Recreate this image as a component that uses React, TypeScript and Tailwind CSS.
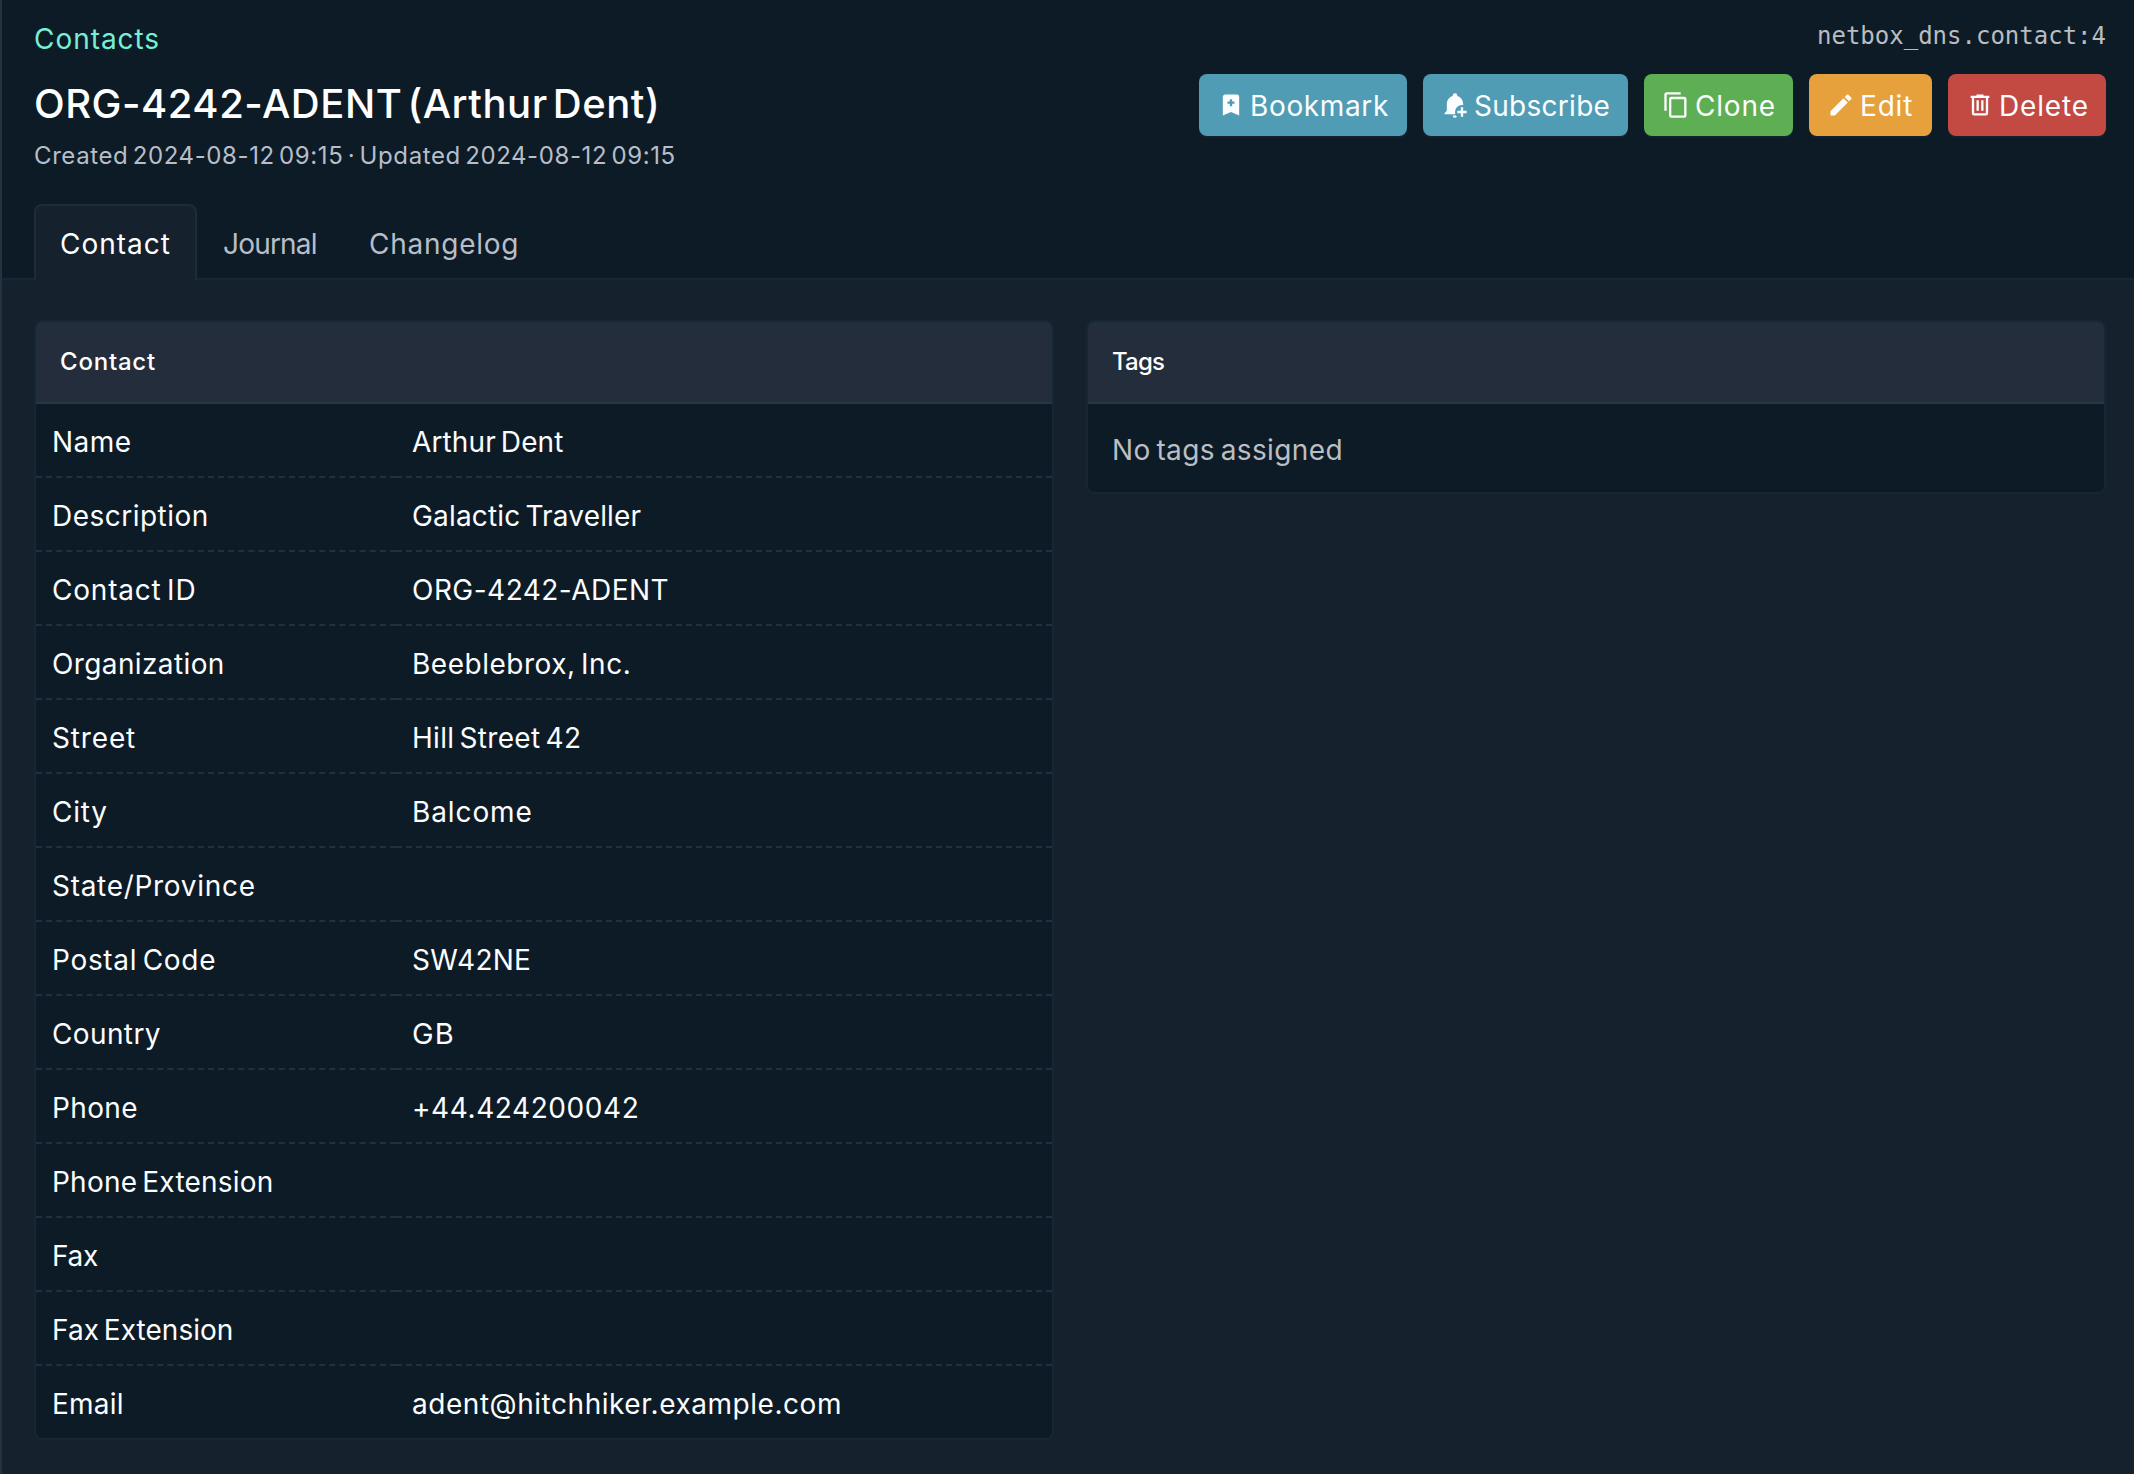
import type { ReactNode } from "react";

const ICONS = {
  bookmark:
    "M17,3A2,2 0 0,1 19,5V21L12,18L5,21V5C5,3.89 5.9,3 7,3H17M11,7V9H9V11H11V13H13V11H15V9H13V7H11Z",
  bell: "M17 14H19V17H22V19H19V22H17V19H14V17H17V14M12 2A2 2 0 0 0 10 4A2 2 0 0 0 10 4.29C7.12 5.14 5 7.82 5 11V17L3 19V20H12.35A6 6 0 0 1 12 18A6 6 0 0 1 18 12A6 6 0 0 1 19 12.09V11C19 7.82 16.88 5.14 14 4.29A2 2 0 0 0 14 4A2 2 0 0 0 12 2M10 21A2 2 0 0 0 12 23A2 2 0 0 0 13.65 22.13A6 6 0 0 1 12.81 21H10Z",
  copy: "M19,21H8V7H19M19,5H8A2,2 0 0,0 6,7V21A2,2 0 0,0 8,23H19A2,2 0 0,0 21,21V7A2,2 0 0,0 19,5M16,1H4A2,2 0 0,0 2,3V17H4V3H16V1Z",
  pencil:
    "M20.71,7.04C21.1,6.65 21.1,6 20.71,5.63L18.37,3.29C18,2.9 17.35,2.9 16.96,3.29L15.12,5.12L18.87,8.87M3,17.25V21H6.75L17.81,9.93L14.06,6.18L3,17.25Z",
  trash:
    "M9,3V4H4V6H5V19A2,2 0 0,0 7,21H17A2,2 0 0,0 19,19V6H20V4H15V3H9M7,6H17V19H7V6M9,8V17H11V8H9M13,8V17H15V8H13Z",
};

const rows: { label: string; labelClass: string; value?: string; valueClass?: string }[] = [
  { label: "Name", labelClass: "tracking-[0.5px]", value: "Arthur Dent", valueClass: "tracking-[0.12px]" },
  { label: "Description", labelClass: "tracking-[0.48px]", value: "Galactic Traveller", valueClass: "tracking-[0.17px]" },
  { label: "Contact ID", labelClass: "tracking-[0.78px]", value: "ORG-4242-ADENT", valueClass: "tracking-[0.47px]" },
  { label: "Organization", labelClass: "tracking-[0.38px]", value: "Beeblebrox, Inc.", valueClass: "tracking-[0.52px]" },
  { label: "Street", labelClass: "tracking-[0.85px]", value: "Hill Street 42", valueClass: "tracking-[0.3px]" },
  { label: "City", labelClass: "tracking-[0.75px]", value: "Balcome", valueClass: "tracking-[0.9px]" },
  { label: "State/Province", labelClass: "tracking-[0.7px]" },
  { label: "Postal Code", labelClass: "tracking-[0.68px]", value: "SW42NE", valueClass: "tracking-[0.25px]" },
  { label: "Country", labelClass: "tracking-[0.38px]", value: "GB", valueClass: "text-[29px] tracking-[1.2px]" },
  { label: "Phone", labelClass: "tracking-[0.35px]", value: "+44.424200042", valueClass: "tracking-[0.58px]" },
  { label: "Phone Extension", labelClass: "tracking-[0.22px]" },
  { label: "Fax", labelClass: "tracking-[-0.3px]" },
  { label: "Fax Extension", labelClass: "tracking-[0.03px]" },
  { label: "Email", labelClass: "tracking-[0.25px]", value: "adent@hitchhiker.example.com", valueClass: "tracking-[0.54px]" },
];

function ActionButton({ icon, label, className }: { icon: string; label: string; className: string }) {
  return (
    <button
      className={
        "flex h-[62px] items-center rounded-lg pl-[18px] text-[28px] leading-10 whitespace-nowrap text-[#fcfdfe] shadow-[0_2px_2px_rgba(35,48,66,0.35)] " +
        className
      }
    >
      <svg viewBox="0 0 24 24" className="mr-[5px] size-7 shrink-0 fill-current">
        <path d={icon} />
      </svg>
      <span className="pt-px">{label}</span>
    </button>
  );
}

function Card({ title, titleClass, children }: { title: string; titleClass: string; children: ReactNode }) {
  return (
    <section className="w-[1020px] rounded-lg border-2 border-[#172635] bg-[#0d1b26]">
      <h2
        className={
          "h-[82px] rounded-t-md border-b-2 border-[#2a3645] bg-[#242d3b] px-6 text-[24px] leading-[79px] font-medium text-white " +
          titleClass
        }
      >
        {title}
      </h2>
      {children}
    </section>
  );
}

export default function App() {
  return (
    <div className="h-[1474px] w-[2134px] overflow-hidden border-l-2 border-[#253142] bg-[#15212c] font-['Inter',sans-serif] text-[28px] leading-10 text-[#fcfdfe]">
      <header className="flex h-[280px] flex-col justify-between border-b-2 border-[#172635] bg-[#0d1b26] pr-7 pl-8">
        <div className="flex justify-between">
          <div className="pt-[19px]">
            <div className="tracking-[0.95px] text-[#75efd6]">Contacts</div>
            <h1 className="mt-[17px] text-[40px] leading-[56px] font-medium tracking-[0.52px] text-white [word-spacing:-6px]">
              ORG-4242-ADENT (Arthur Dent)
            </h1>
            <div className="mt-2 text-[24px] leading-8 tracking-[0.6px] text-[#b8bec8] [word-spacing:-3px]">
              Created 2024-08-12 09:15 · Updated 2024-08-12 09:15
            </div>
          </div>
          <div className="flex flex-col items-end pt-5">
            <div className="font-['DejaVu_Sans_Mono',monospace] text-[24px] leading-8 text-[#b9bcc0]">
              netbox_dns.contact:4
            </div>
            <div className="mt-[22px] flex gap-4">
              <ActionButton icon={ICONS.bookmark} label="Bookmark" className="w-[208px] bg-[#509cb4] tracking-[0.64px]" />
              <ActionButton icon={ICONS.bell} label="Subscribe" className="w-[205px] bg-[#509cb4] tracking-[0.28px]" />
              <ActionButton icon={ICONS.copy} label="Clone" className="w-[149px] bg-[#5eae54] tracking-[0.8px]" />
              <ActionButton icon={ICONS.pencil} label="Edit" className="w-[123px] bg-[#e6a13c] tracking-[0.8px]" />
              <ActionButton icon={ICONS.trash} label="Delete" className="w-[158px] bg-[#c24a43] tracking-[0.85px]" />
            </div>
          </div>
        </div>
        <nav className="-mb-0.5 flex h-[76px] text-[#b8bec8]">
          <a className="w-[163px] rounded-t-lg border-2 border-b-0 border-[#1f2b3a] bg-[#15212c] pt-[18px] pl-6 tracking-[1px] text-white">
            Contact
          </a>
          <a className="w-[146px] pt-5 pl-[26px] tracking-[-0.8px]">Journal</a>
          <a className="pt-5 pl-[26px] tracking-[0.75px]">Changelog</a>
        </nav>
      </header>

      <main className="flex items-start gap-8 pt-10 pl-8">
        <Card title="Contact" titleClass="tracking-[0.78px]">
          <table className="mb-px w-full table-fixed border-collapse">
            <tbody>
              {rows.map((row, i) => {
                const line =
                  i < rows.length - 1 ? "border-b-2 border-dashed border-[#222f42] " : "";
                const height = i === 0 || i === rows.length - 1 ? "h-[73px]" : "h-[74px]";
                const actualHeight = i === rows.length - 1 ? "h-[72px]" : height;
                return (
                  <tr key={row.label} className={actualHeight}>
                    <th
                      className={
                        "w-[360px] px-4 pt-[4px] pb-0 text-left font-normal [word-spacing:-3px] " + line + row.labelClass
                      }
                    >
                      {row.label}
                    </th>
                    <td className={"px-4 pt-[4px] pb-0 [word-spacing:-3px] " + line + (row.valueClass ?? "")}>
                      {row.value}
                    </td>
                  </tr>
                );
              })}
            </tbody>
          </table>
        </Card>
        <Card title="Tags" titleClass="tracking-[-0.8px]">
          <div className="px-6 pt-[26px] pb-[22px] tracking-[0.38px] text-[#bbbec2] [word-spacing:-2.5px]">
            No tags assigned
          </div>
        </Card>
      </main>
    </div>
  );
}
